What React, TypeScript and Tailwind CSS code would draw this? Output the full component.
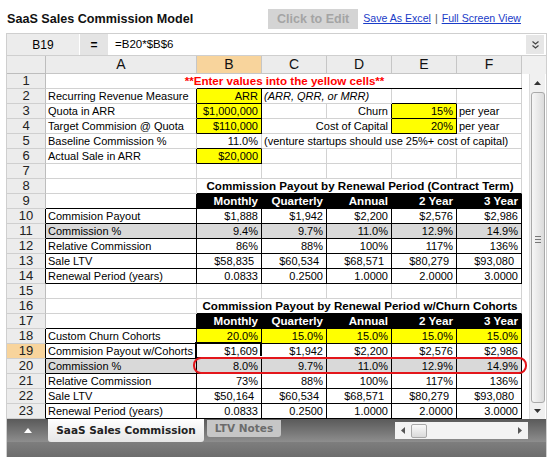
import React from "react";
import clsx from "clsx";

type Cell = {
  t?: string;
  s?: number;
  al?: "r" | "c";
  b?: boolean;
  it?: boolean;
  bg?: "y" | "g" | "k";
  red?: boolean;
  acc?: boolean;
};

const E: Cell = {};
const L = (t: string, x: Partial<Cell> = {}): Cell => ({ t, ...x });
const R = (t: string, x: Partial<Cell> = {}): Cell => ({ t, al: "r", ...x });

const head = (): Cell[] => [
  E,
  ...["Monthly", "Quarterly", "Annual", "2 Year", "3 Year"].map((h) => R(h, { b: true, bg: "k" })),
];
const dr = (label: string, vals: string[], lx: Partial<Cell> = {}, vx: Partial<Cell> = {}): Cell[] => [
  L(label, lx),
  ...vals.map((v) => R(v, vx)),
];

const rows: Cell[][] = [
  [{ t: "**Enter values into the yellow cells**", s: 6, al: "c", b: true, red: true }],
  [L("Recurring Revenue Measure"), R("ARR", { bg: "y" }), L("(ARR, QRR, or MRR)", { it: true, s: 2 }), E, E],
  [L("Quota in ARR"), R("$1,000,000", { bg: "y" }), E, R("Churn"), R("15%", { bg: "y" }), L("per year")],
  [L("Target Commision @ Quota"), R("$110,000", { bg: "y" }), R("Cost of Capital", { s: 2 }), R("20%", { bg: "y" }), L("per year")],
  [L("Baseline Commission %"), R("11.0%"), L("(venture startups should use 25%+ cost of capital)", { s: 4 })],
  [L("Actual Sale in ARR"), R("$20,000", { bg: "y" }), E, E, E, E],
  [E, E, E, E, E, E],
  [E, { t: "Commission Payout by Renewal Period (Contract Term)", s: 5, al: "c", b: true }],
  head(),
  dr("Commision Payout", ["$1,888", "$1,942", "$2,200", "$2,576", "$2,986"]),
  dr("Commission %", ["9.4%", "9.7%", "11.0%", "12.9%", "14.9%"], { bg: "g" }, { bg: "g" }),
  dr("Relative Commission", ["86%", "88%", "100%", "117%", "136%"]),
  dr("Sale LTV", ["$58,835", "$60,534", "$68,571", "$80,279", "$93,080"], {}, { acc: true }),
  dr("Renewal Period (years)", ["0.0833", "0.2500", "1.0000", "2.0000", "3.0000"]),
  [E, E, E, E, E, E],
  [E, { t: "Commission Payout by Renewal Period w/Churn Cohorts", s: 5, al: "c", b: true }],
  head(),
  dr("Custom Churn Cohorts", ["20.0%", "15.0%", "15.0%", "15.0%", "15.0%"], {}, { bg: "y" }),
  dr("Commision Payout w/Cohorts", ["$1,609", "$1,942", "$2,200", "$2,576", "$2,986"]),
  dr("Commission %", ["8.0%", "9.7%", "11.0%", "12.9%", "14.9%"], { bg: "g" }, { bg: "g" }),
  dr("Relative Commission", ["73%", "88%", "100%", "117%", "136%"]),
  dr("Sale LTV", ["$50,164", "$60,534", "$68,571", "$80,279", "$93,080"], {}, { acc: true }),
  dr("Renewal Period (years)", ["0.0833", "0.2500", "1.0000", "2.0000", "3.0000"]),
];

// black borders: [row1, row2, col1, col2], cols 1..6 = A..F
const boxes = [
  [2, 2, 2, 2], [3, 3, 2, 2], [4, 4, 2, 2], [6, 6, 2, 2], [3, 3, 5, 5], [4, 4, 5, 5],
  [9, 9, 2, 6], [10, 14, 1, 6], [17, 17, 2, 6], [18, 23, 1, 6],
];
const rb: boolean[][] = Array.from({ length: 24 }, () => Array(7).fill(false));
const bb: boolean[][] = Array.from({ length: 24 }, () => Array(7).fill(false));
for (const [r1, r2, c1, c2] of boxes) {
  for (let r = r1; r <= r2; r++) {
    rb[r][c1 - 1] = true;
    for (let c = c1; c <= c2; c++) {
      rb[r][c] = true;
      bb[r][c] = true;
    }
  }
  for (let c = c1; c <= c2; c++) bb[r1 - 1][c] = true;
}

const spanCls: Record<number, string> = {
  1: "col-span-1",
  2: "col-span-2",
  4: "col-span-4",
  5: "col-span-5",
  6: "col-span-6",
};

const gridCols = "grid grid-cols-[39px_151px_65px_65px_65px_65px_65px]";

function Row({ r, cells }: { r: number; cells: Cell[] }) {
  let col = 1;
  return (
    <div className={gridCols}>
      <div
        className={clsx(
          "h-[15px] border-b border-r border-b-[#cfcfcf] text-center text-[13px] leading-[14px] text-[#222]",
          rb[r][0] ? "border-r-black" : "border-r-[#bdbdbd]",
          r === 19 ? "bg-[#f8d49c]" : "bg-[#ececec]"
        )}
      >
        {r}
      </div>
      {cells.map((c, i) => {
        const s = c.s ?? 1;
        const start = col;
        const end = col + s - 1;
        col += s;
        return (
          <div
            key={i}
            className={clsx(
              "relative h-[15px] border-b border-r whitespace-nowrap leading-[14px]",
              c.b ? "text-[11.6px] font-bold" : "text-[11px]",
              spanCls[s],
              rb[r][end] ? "border-r-black" : "border-r-[#d2d2d2]",
              bb[r][end] ? "border-b-black" : "border-b-[#d2d2d2]",
              c.al === "r" ? "text-right" : c.al === "c" ? "text-center" : "text-left",
              c.acc ? "pr-[7px]" : c.al === "r" ? "pr-[3px]" : "pl-[2px]",
              c.bg === "y" && "bg-[#ffff00]",
              c.bg === "g" && "bg-[#d9d9d9]",
              c.bg === "k" && "bg-black text-white",
              c.it && "italic",
              c.red && "text-[#ff0000]"
            )}
          >
            {c.t}
            {r === 1 && <div className="absolute left-[151px] right-[-1px] bottom-[-1px] h-px bg-black" />}
            {r === 19 && start === 2 && (
              <div className="absolute left-[-2px] top-[-2px] right-[-1px] bottom-[-1px] border-2 border-black">
                <div className="absolute right-[-4px] bottom-[-4px] h-[5px] w-[5px] bg-black border border-white" />
              </div>
            )}
            {r === 20 && start === 2 && (
              <div className="absolute left-[-4px] top-[-2px] h-[17px] w-[334px] rounded-[8px] border-2 border-[#e3161b] z-10" />
            )}
          </div>
        );
      })}
    </div>
  );
}

function VScroll() {
  return (
    <div className="flex w-[24px] flex-col bg-white">
      <div className="h-[18px] bg-[#f0f0f0]" />
      <div className="flex flex-1">
        <div className="w-[7px]" />
        <div className="flex w-[16px] flex-col items-center bg-[#f0f0f0] border-l border-[#dcdcdc]">
          <div className="flex h-[18px] items-center justify-center">
            <svg width="7" height="4" viewBox="0 0 7 4">
              <path d="M0 4 L3.5 0 L7 4 Z" fill="#333" />
            </svg>
          </div>
          <div className="relative w-[14px] flex-1 rounded-[3px] border border-[#a9a9a9] bg-gradient-to-r from-[#f6f6f6] to-[#dcdcdc]">
            <div className="absolute left-[3px] top-[143px] flex w-[6px] flex-col gap-[2px]">
              <div className="h-px bg-[#777]" />
              <div className="h-px bg-[#777]" />
              <div className="h-px bg-[#777]" />
            </div>
          </div>
          <div className="flex h-[16px] items-center justify-center">
            <svg width="7" height="4" viewBox="0 0 7 4">
              <path d="M0 0 L3.5 4 L7 0 Z" fill="#333" />
            </svg>
          </div>
        </div>
      </div>
    </div>
  );
}

export default function App() {
  return (
    <div className="relative h-[457px] w-[549px] overflow-hidden bg-white font-['Liberation_Sans',Arial,sans-serif] text-black">
      <div className="flex h-[33px] items-center pt-[5px] pl-[7px]">
        <div className="text-[12.6px] font-bold text-[#111]">SaaS Sales Commission Model</div>
        <div className="ml-[75px] flex h-[20px] w-[90px] items-center justify-center bg-[#d4d4d4] text-[12.5px] font-bold text-[#a4a4a4]">
          Click to Edit
        </div>
        <div className="ml-[5px] flex items-center text-[10.6px] text-[#1a3cc8]">
          <span className="underline">Save As Excel</span>
          <span className="mx-[4px] text-[#555]">|</span>
          <span className="underline">Full Screen View</span>
        </div>
      </div>

      <div className="ml-[6px] w-[541px] border border-b-0 border-[#cfcfcf]">
        <div className="flex h-[22px] border-b border-[#cfcfcf]">
          <div className="flex w-[72px] items-center justify-center bg-[#ececec] text-[12px]">B19</div>
          <div className="ml-px flex w-[28px] items-center justify-center bg-[#e4e4e4] text-[12px] font-bold">=</div>
          <div className="flex flex-1 items-center pl-[7px] text-[11.5px]">=B20*$B$6</div>
          <div className="my-[1px] mr-[2px] flex w-[18px] items-center justify-center bg-[#e6e6e6]">
            <svg width="7" height="8" viewBox="0 0 7 8">
              <path d="M0.5 0.5 L3.5 3 L6.5 0.5 M0.5 4.5 L3.5 7 L6.5 4.5" stroke="#444" strokeWidth="1.2" fill="none" />
            </svg>
          </div>
        </div>

        <div className="flex">
          <div className="w-[515px]">
            <div className={gridCols}>
              <div className="h-[18px] border-b border-r border-[#bdbdbd] bg-[#ececec]" />
              {["A", "B", "C", "D", "E", "F"].map((l) => (
                <div
                  key={l}
                  className={clsx(
                    "h-[18px] border-b border-r border-[#c6c6c6] text-center text-[14px] leading-[17px] text-[#111]",
                    l === "B" ? "bg-[#f8d49c]" : "bg-[#ececec]"
                  )}
                >
                  {l}
                </div>
              ))}
            </div>
            {rows.map((cells, i) => (
              <Row key={i} r={i + 1} cells={cells} />
            ))}
          </div>
          <VScroll />
        </div>

        <div className="w-[539px]">
          <div className="flex h-[23px] items-start bg-gradient-to-b from-[#5a5a5a] to-[#8e8e8e]">
            <div className="flex h-[23px] w-[41px] items-center justify-center">
              <svg width="8" height="5" viewBox="0 0 8 5">
                <path d="M0 5 L4 0 L8 5 Z" fill="#fff" />
              </svg>
            </div>
            <div className="flex h-[23px] w-[156px] items-center justify-center rounded-b-[3px] bg-gradient-to-b from-[#ffffff] to-[#e6e6e6] font-['DejaVu_Sans',sans-serif] text-[10.5px] font-bold text-[#222]">
              SaaS Sales Commission
            </div>
            <div className="ml-[3px] mt-[1px] flex h-[17px] w-[74px] items-center justify-center rounded-b-[3px] bg-[#c6c6c6] font-['DejaVu_Sans',sans-serif] text-[10.5px] font-bold text-[#6b6b6b]">
              LTV Notes
            </div>
            <div className="ml-[114px] mt-[3px] flex h-[17px] w-[133px] items-center bg-[#f3f3f3]">
              <svg className="ml-[6px]" width="4" height="7" viewBox="0 0 4 7">
                <path d="M4 0 L0 3.5 L4 7 Z" fill="#555" />
              </svg>
              <div className="ml-[6px] h-[14px] w-[16px] rounded-[2px] border border-[#a9a9a9] bg-gradient-to-b from-[#fafafa] to-[#dadada]" />
              <div className="flex-1" />
              <svg className="mr-[6px]" width="4" height="7" viewBox="0 0 4 7">
                <path d="M0 0 L4 3.5 L0 7 Z" fill="#555" />
              </svg>
            </div>
          </div>
          <div className="h-[16px] bg-gradient-to-b from-[#7e7e7e] to-[#6c6c6c]" />
        </div>
      </div>
    </div>
  );
}
